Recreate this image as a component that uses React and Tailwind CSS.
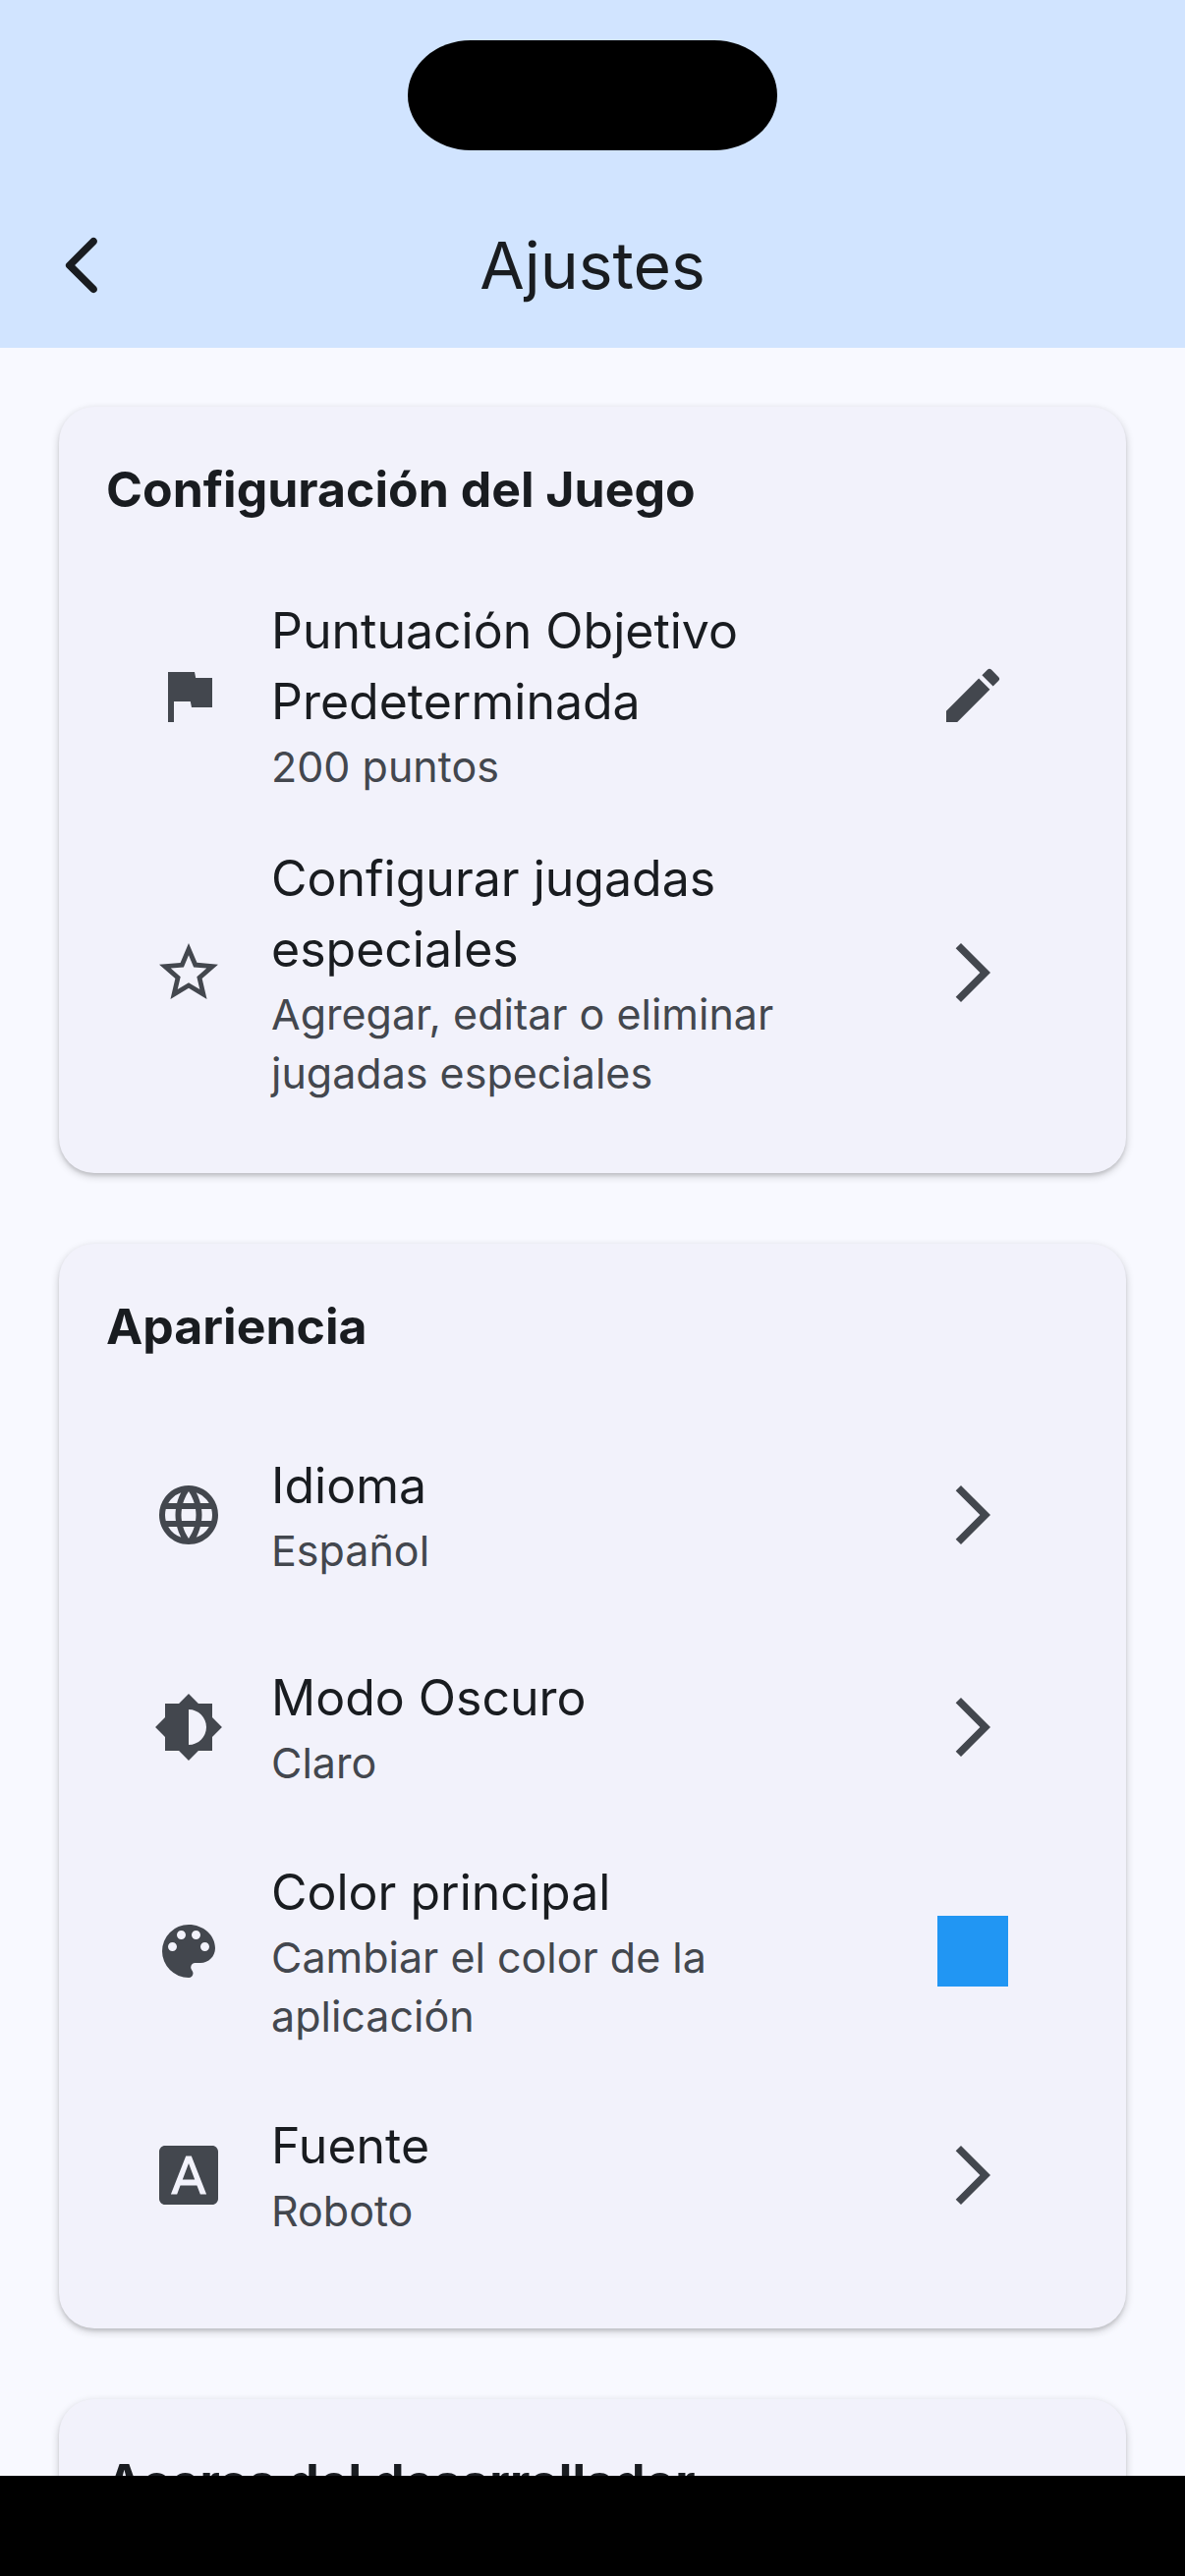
import React from "react";
import {
  MdArrowForwardIos,
  MdBrightness6,
  MdColorLens,
  MdEdit,
  MdFlag,
  MdFontDownload,
  MdLanguage,
  MdStarBorder,
} from "react-icons/md";

const gameSettings = [
  {
    icon: MdFlag,
    title: "Puntuación Objetivo Predeterminada",
    subtitle: "200 puntos",
    trailing: "edit",
  },
  {
    icon: MdStarBorder,
    title: "Configurar jugadas especiales",
    subtitle: "Agregar, editar o eliminar jugadas especiales",
    trailing: "arrow",
  },
];

const appearanceSettings = [
  { icon: MdLanguage, title: "Idioma", subtitle: "Español", trailing: "arrow" },
  { icon: MdBrightness6, title: "Modo Oscuro", subtitle: "Claro", trailing: "arrow" },
  {
    icon: MdColorLens,
    title: "Color principal",
    subtitle: "Cambiar el color de la aplicación",
    trailing: "color",
  },
  { icon: MdFontDownload, title: "Fuente", subtitle: "Roboto", trailing: "arrow" },
];

function BackIcon() {
  return (
    <svg viewBox="0 0 24 24" className="size-[72px]" fill="currentColor" aria-hidden="true">
      <path d="M16.62 2.99c-.49-.49-1.28-.49-1.77 0L6.54 11.3c-.39.39-.39 1.02 0 1.41l8.31 8.31c.49.49 1.28.49 1.77 0s.49-1.28 0-1.77L9.38 12l7.25-7.25c.48-.48.48-1.28-.01-1.76z" />
    </svg>
  );
}

function Trailing({ type }) {
  if (type === "color") {
    return <span className="size-[72px] shrink-0 bg-[#2196f3]"></span>;
  }
  if (type === "edit") {
    return <MdEdit className="size-[72px] shrink-0" />;
  }
  return <MdArrowForwardIos className="size-[72px] shrink-0" />;
}

function SettingTile({ icon: Icon, title, subtitle, trailing }) {
  return (
    <button
      type="button"
      className="flex min-h-[216px] w-full items-center gap-12 py-6 pr-[72px] pl-12 text-left text-[#43474e]"
    >
      <Icon className="size-[72px] shrink-0" />
      <span className="min-w-0 flex-1">
        <span className="block text-[50px] leading-[72px] text-[#191c20]">{title}</span>
        <span className="block text-[43px] leading-[60px]">{subtitle}</span>
      </span>
      <Trailing type={trailing} />
    </button>
  );
}

function SettingsCard({ title, items = [] }) {
  return (
    <section className="shrink-0 rounded-[36px] bg-[#f2f2fb] p-12 shadow-[0_3px_8px_rgba(0,0,0,0.2),0_3px_3px_rgba(0,0,0,0.08)]">
      <h2 className="mb-12 text-[50px] leading-[72px] font-bold text-[#191c20]">{title}</h2>
      {items.map((item) => (
        <SettingTile key={item.title} {...item} />
      ))}
    </section>
  );
}

export default function App() {
  return (
    <div className="flex h-screen flex-col overflow-hidden bg-[#f8f9ff] font-['Inter',sans-serif]">
      <header className="shrink-0 bg-[#d1e4ff] text-[#191c20]">
        {/* Status bar with the camera cutout */}
        <div className="flex h-[186px] items-start justify-center pt-[41px]">
          <div className="h-[112px] w-[376px] rounded-[64px/56px] bg-black"></div>
        </div>

        <div className="grid h-[168px] grid-cols-[168px_1fr_168px] items-center">
          <button type="button" aria-label="Volver" className="flex justify-center">
            <BackIcon />
          </button>
          <h1 className="text-center text-[66px] leading-[84px]">Ajustes</h1>
        </div>
      </header>

      <main className="flex min-h-0 flex-1 flex-col gap-[72px] overflow-hidden p-[60px]">
        <SettingsCard title="Configuración del Juego" items={gameSettings} />
        <SettingsCard title="Apariencia" items={appearanceSettings} />
        <SettingsCard title="Acerca del desarrollador" />
      </main>

      <footer className="h-[102px] shrink-0 bg-black"></footer>
    </div>
  );
}
